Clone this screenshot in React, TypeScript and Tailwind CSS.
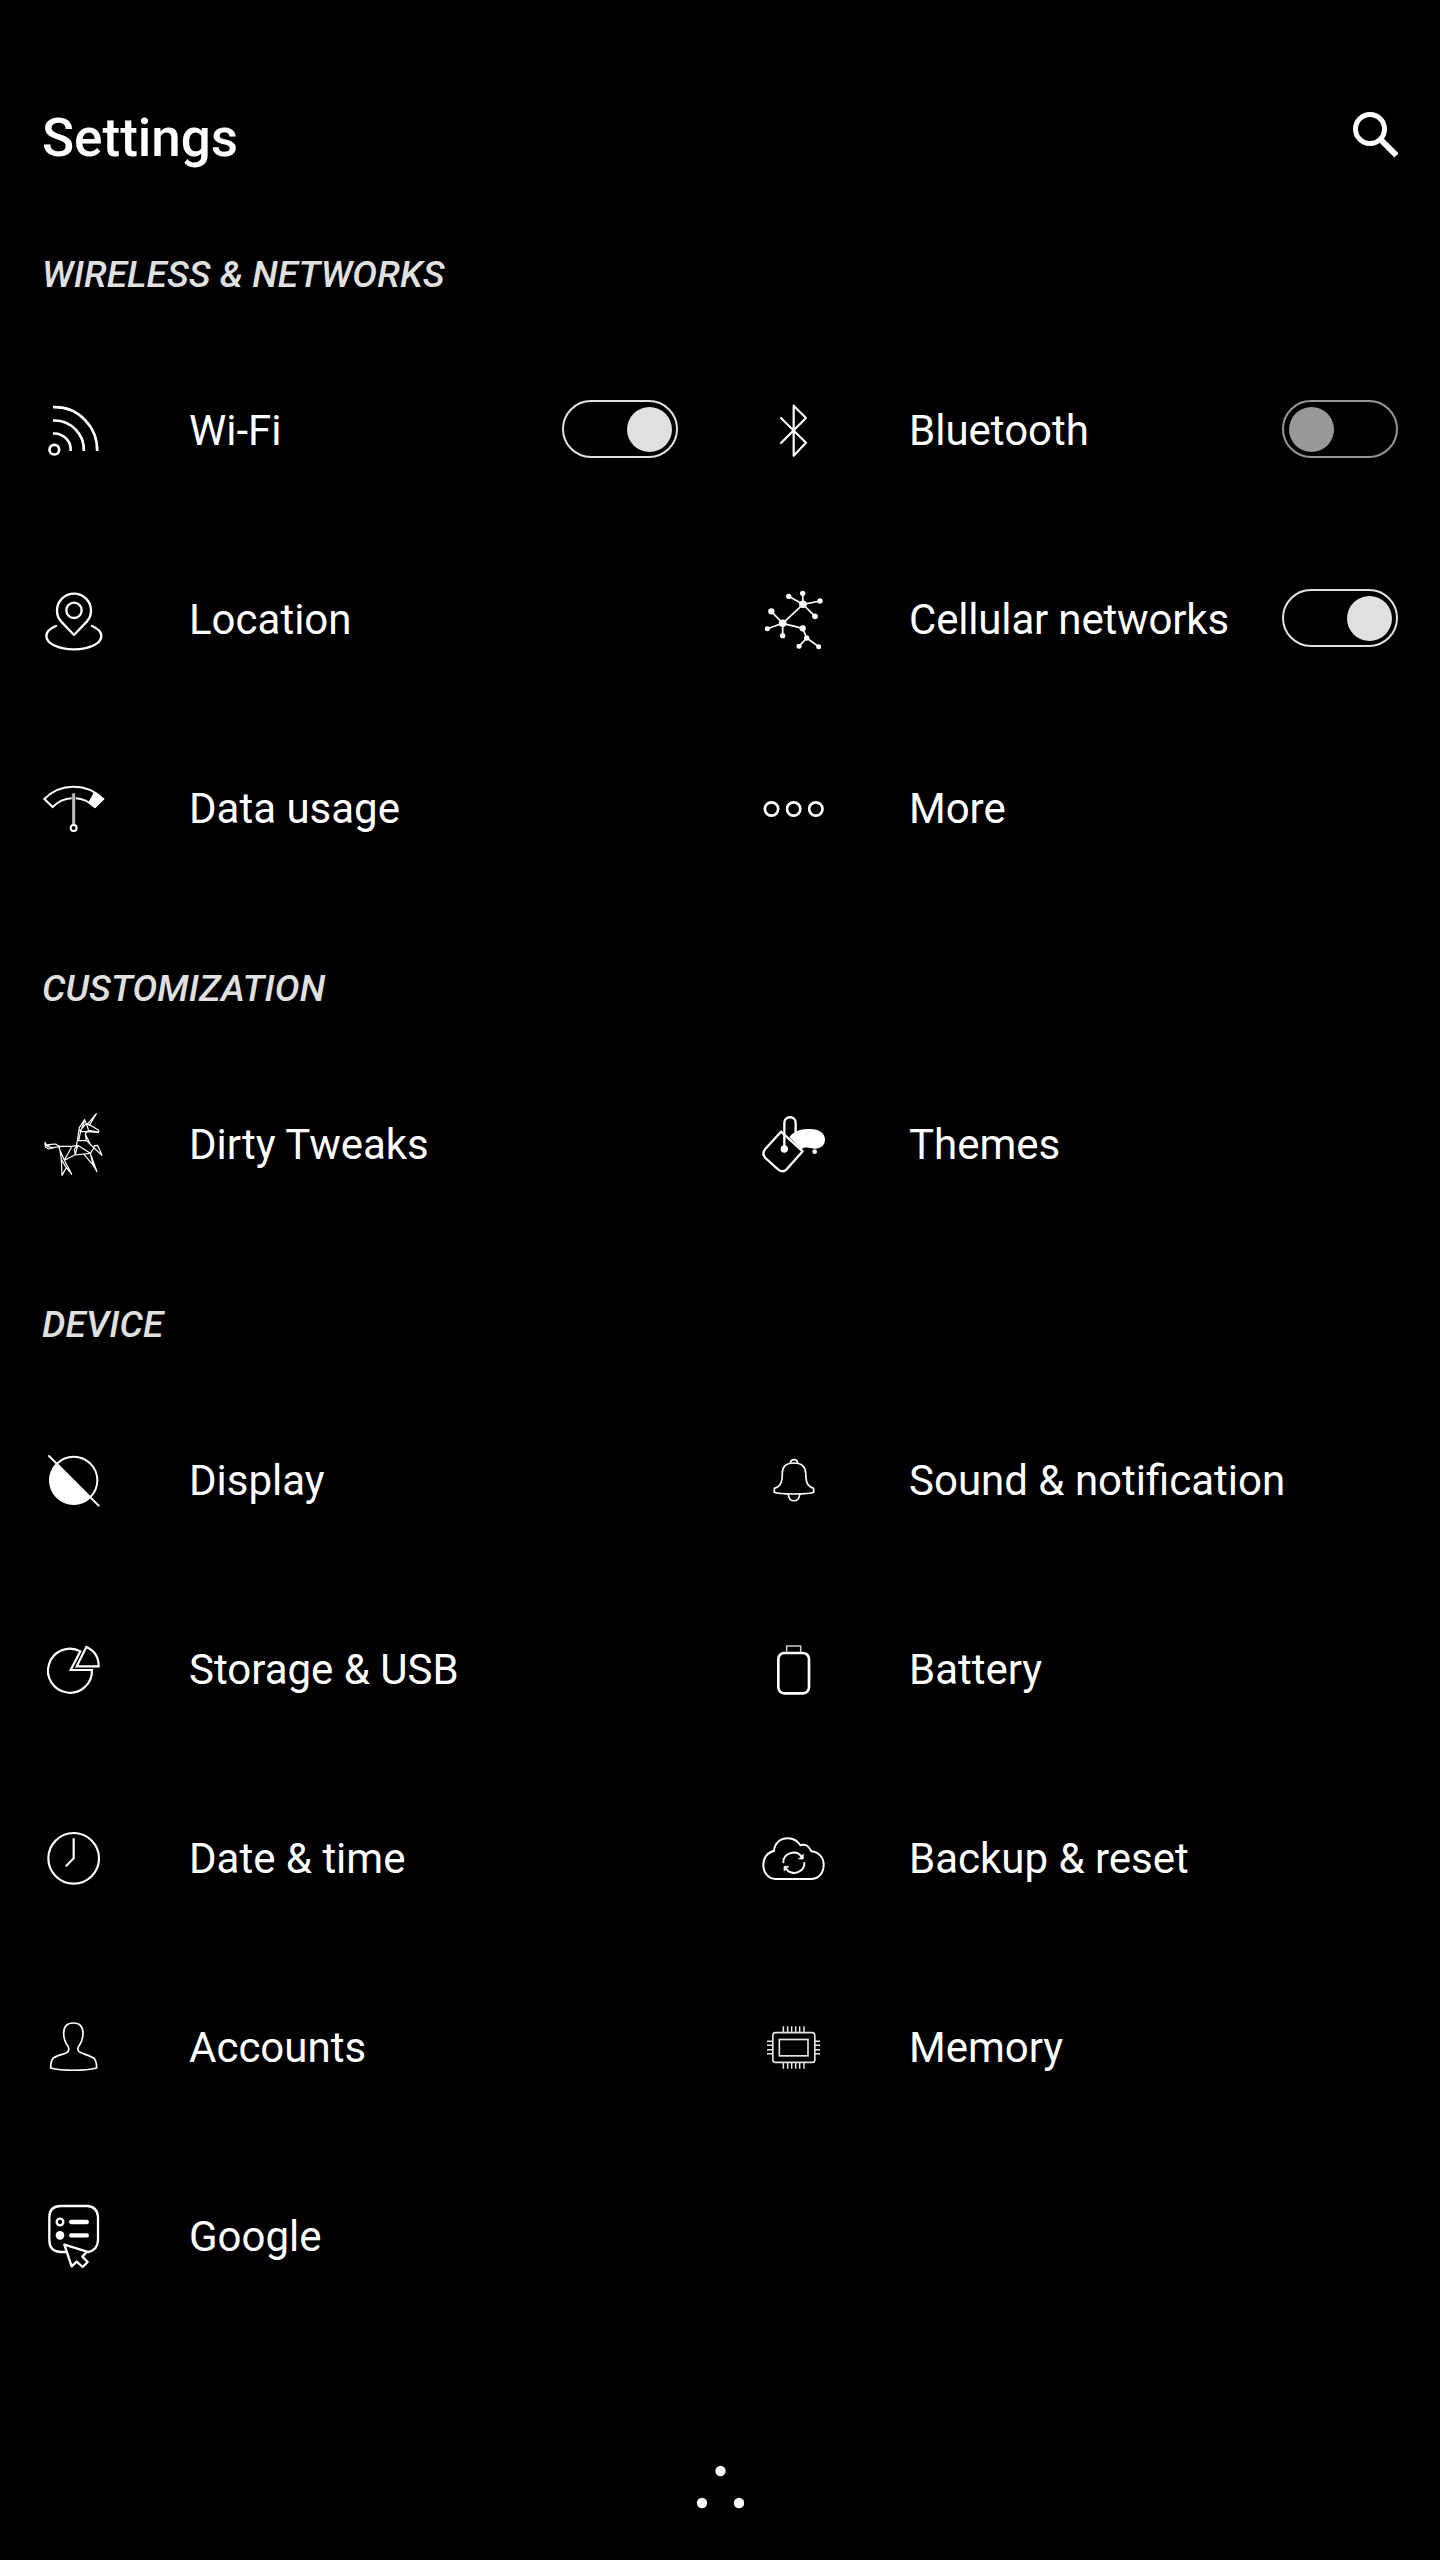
import type { ReactNode } from "react";

type IconProps = { box: string; width?: number; children: ReactNode };

function Icon({ box, width = 6, children }: IconProps) {
  return (
    <svg
      viewBox={box}
      className="mt-[63px] h-[66px] w-[66px] shrink-0 overflow-visible"
      fill="none"
      stroke="#fff"
      strokeWidth={width}
      strokeLinecap="round"
      strokeLinejoin="round"
    >
      {children}
    </svg>
  );
}

const WifiIcon = () => (
  <Icon box="33 54 198 198" width={8}>
    <circle cx="73" cy="209" r="14.500" />
    <g strokeLinecap="butt">
      <path d="M69 81.500H75A126.500 129 0 0 1 201.500 213" />
      <path d="M69 121.500H73A88.500 88 0 0 1 161.500 213" />
      <path d="M69 160.500H73A49 49 0 0 1 122 213" />
    </g>
  </Icon>
);

const BluetoothIcon = () => (
  <Icon box="63 54 198 198" width={6.5}>
    <path d="M123 114L198 188L161 227V77L198 114L123 189" />
  </Icon>
);

const LocationIcon = () => (
  <Icon box="33 621 198 198" width={7}>
    <circle cx="132" cy="691" r="23" />
    <path d="M132 765L93 724C86 716 81 704 81 692A51 51 0 0 1 183 692C183 704 178 716 171 724Z" />
    <path d="M78 738C58 746 49 756 49 768C49 791 86 808 132 808C178 808 214 791 214 768C214 756 205 746 186 738" />
  </Icon>
);

const links =
  "M189 673L146 649M189 673L188 640M189 673L240 663M189 673L225 709M189 673L128 730L94 694M128 730L82 746M128 730V767M128 730L188 745L200 774L177 799M200 774L236 800";
const nodes: [number, number, number][] = [
  [189, 673, 11.5], [128, 730, 11.5], [94, 694, 9.5], [188, 745, 9.5], [200, 774, 8],
  [146, 649, 8], [188, 640, 8], [240, 663, 8], [225, 709, 8.5], [82, 746, 7.5],
  [128, 767, 8], [177, 799, 7.5], [236, 800, 7.5],
];

const NetworkIcon = () => (
  <Icon box="63 621 198 198" width={5}>
    <path d={links} />
    {nodes.map(([x, y, r]) => (
      <circle key={`${x}-${y}`} cx={x} cy={y} r={r} fill="#fff" stroke="none" />
    ))}
  </Icon>
);

const DataIcon = () => (
  <Icon box="33 1188 198 198" width={6}>
    <g strokeLinejoin="miter" strokeLinecap="butt">
      <path d="M125 1255C103 1256 84 1265 68 1281L43 1257C67 1232 98 1220 131 1220C164 1220 195 1232 219 1257L195 1281C177 1265 158 1256 137 1255" />
      <path d="M194 1239L219 1257L195 1281L178 1268Z" fill="#fff" />
      <path d="M131 1240V1334" stroke="#bdbdbd" strokeWidth="9" />
    </g>
    <circle cx="131" cy="1344" r="9" />
  </Icon>
);

const MoreIcon = () => (
  <Icon box="63 1188 198 198" width={8}>
    <circle cx="94.500" cy="1287" r="20" />
    <circle cx="161" cy="1287" r="20" />
    <circle cx="227.500" cy="1287" r="20" />
  </Icon>
);

const UnicornIcon = () => (
  <Icon box="33 66 198 198" width={3.6}>
    <path d="M172 103L199 71L178 106M164 89L148 113L142 152L139 167M164 89L152 124L146 151M164 89L169 101L150 122M164 89L160 105M169 101L181 106L206 121V126L176 121L169 101M176 121L170 125L151 124M170 125L205 127M170 125L166 133L169 151L181 163L192 174M169 151L142 152M166 133L182 165" />
    <path d="M45 157L46 171L56 177L80 171L89 171L77 162L62 163L52 169L45 157M52 169L67 173L80 171M62 163L48 165" />
    <path d="M86 169H126L143 166L181 190L134 195L103 211L126 169M86 169L90 181L94 208L96 256L109 233L98 215L94 208M90 181L103 211M109 233L125 252L103 211M143 166L136 194L133 178L143 166" />
    <path d="M181 190L192 174L193 167L203 166L216 196L192 174M162 193L190 226L201 245L181 190M190 226L182 195" />
  </Icon>
);

const ThemesIcon = () => (
  <Icon box="63 66 198 198" width={7}>
    <path d="M123 125L188 184L140 238Q128 249 115 239L76 204Q65 192 75 178Z" />
    <path d="M133 170V99C133 76 167 76 167 99V140" />
    <circle cx="133" cy="177" r="11" fill="#fff" stroke="none" />
    <circle cx="224" cy="185" r="7" fill="#fff" stroke="none" />
    <path
      d="M148 141C164 121 184 117 211 117C238 117 255 130 255 148C255 167 242 176 225 176C213 176 205 170 190 174L185 178Z"
      fill="#fff"
      stroke="none"
    />
  </Icon>
);

const DisplayIcon = () => (
  <Icon box="33 54 198 198">
    <circle cx="131" cy="151" r="71" />
    <path d="M80 100A72 72 0 1 0 182 202Z" fill="#fff" stroke="none" />
    <path d="M57 78L206 227" />
  </Icon>
);

const StorageIcon = () => (
  <Icon box="33 621 198 198" width={6.5}>
    <path d="M151 664A66 66 0 1 0 186 720H122Z" strokeLinejoin="miter" />
    <path d="M140 709H206C206 682 192 661 169 651Z" strokeLinejoin="miter" />
  </Icon>
);

const ClockIcon = () => (
  <Icon box="33 1188 198 198" width={6.5}>
    <circle cx="131" cy="1285" r="76" />
    <path d="M131 1227V1285L109 1307" />
  </Icon>
);

const BellIcon = () => (
  <Icon box="63 54 198 198" width={5}>
    <path d="M127 129C127 109 141 99 162 99C183 99 196 109 197 129C198 154 199 168 221 175V187C215 190 205 192 162 192C120 192 109 190 103 187V175C123 170 127 154 127 129Z" />
    <path d="M151 98C154 86 170 86 173 98M145 195C147 218 177 218 179 195" />
  </Icon>
);

const BatteryIcon = () => (
  <Icon box="63 621 198 198">
    <path d="M140 664V648H182V664" stroke="#c8c8c8" strokeWidth="4.500" strokeLinejoin="miter" />
    <rect x="115" y="669" width="92" height="121" rx="18" strokeWidth="8" />
  </Icon>
);

const CloudIcon = () => (
  <Icon box="63 1188 198 198" width={6}>
    <path d="M107 1347C84 1347 70 1327 70 1304C70 1283 83 1266 102 1263C103 1240 121 1225 143 1225C161 1225 173 1233 181 1246C196 1241 208 1249 213 1263C237 1267 251 1283 251 1304C251 1328 237 1347 212 1347Z" />
    <path d="M130 1297C129 1271 166 1257 184 1279M193 1299C194 1325 159 1340 139 1318" />
    <path d="M190 1273V1287H177ZM132 1322V1309H146Z" fill="#fff" strokeWidth="2" />
  </Icon>
);

const AccountIcon = () => (
  <Icon box="33 75 198 198" width={5}>
    <path d="M130 99C111 99 101 111 101 130C101 147 107 160 115 171C118 178 116 184 110 188C95 195 78 197 69 205C63 212 62 223 62 234C96 243 164 243 200 234C200 223 198 212 193 206C182 197 164 194 150 187C144 184 142 178 145 171C153 160 159 147 159 130C159 111 149 99 130 99Z" />
  </Icon>
);

const MemoryIcon = () => (
  <Icon box="63 75 198 198" width={5}>
    <g stroke="#e4e4e4">
      <rect x="98.500" y="128" width="126" height="89" rx="8" />
      <rect x="118" y="148.500" width="86" height="49" strokeLinejoin="miter" />
      <path
        d="M130 109V127M143 109V127M155 109V127M167 109V127M179 109V127M192 109V127M130 218V236M143 218V236M155 218V236M167 218V236M179 218V236M192 218V236M81 154H98M81 166H98M81 179H98M81 191H98M225 154H240M225 166H240M225 179H240M225 191H240"
        strokeLinecap="butt"
        strokeWidth="4.500"
      />
    </g>
  </Icon>
);

const GoogleIcon = () => (
  <Icon box="33 642 198 198" width={7}>
    <path d="M108 786H91Q58 784 58 751V681Q58 650 91 648H171Q202 650 204 681V751Q203 781 174 786" />
    <circle cx="90" cy="696" r="10" />
    <circle cx="90" cy="736" r="13" fill="#fff" stroke="none" />
    <path d="M123.500 696H170.500M123.500 736H170.500" strokeWidth="13" />
    <path d="M103 764L125 829L140 815L158 831L173 816L157 800L171 785Z" />
  </Icon>
);

function Toggle({ on }: { on: boolean }) {
  return (
    <span
      role="switch"
      aria-checked={on}
      className={
        on
          ? "mt-[65px] flex h-[58px] w-[116px] shrink-0 items-center justify-end rounded-full border-2 border-[#e0e0e0] px-[4.5px]"
          : "mt-[65px] flex h-[58px] w-[116px] shrink-0 items-center justify-start rounded-full border-2 border-[#969696] px-[4.5px]"
      }
    >
      <span className={on ? "size-[45px] rounded-full bg-[#e0e0e0]" : "size-[45px] rounded-full bg-[#999999]"} />
    </span>
  );
}

type Item = { label: string; icon: ReactNode; toggle?: boolean; tight?: boolean };

const sections: { title: string; items: Item[] }[] = [
  {
    title: "WIRELESS & NETWORKS",
    items: [
      { label: "Wi-Fi", icon: <WifiIcon />, toggle: true },
      { label: "Bluetooth", icon: <BluetoothIcon />, toggle: false },
      { label: "Location", icon: <LocationIcon /> },
      { label: "Cellular networks", icon: <NetworkIcon />, toggle: true, tight: true },
      { label: "Data usage", icon: <DataIcon /> },
      { label: "More", icon: <MoreIcon /> },
    ],
  },
  {
    title: "CUSTOMIZATION",
    items: [
      { label: "Dirty Tweaks", icon: <UnicornIcon /> },
      { label: "Themes", icon: <ThemesIcon /> },
    ],
  },
  {
    title: "DEVICE",
    items: [
      { label: "Display", icon: <DisplayIcon /> },
      { label: "Sound & notification", icon: <BellIcon /> },
      { label: "Storage & USB", icon: <StorageIcon /> },
      { label: "Battery", icon: <BatteryIcon /> },
      { label: "Date & time", icon: <ClockIcon /> },
      { label: "Backup & reset", icon: <CloudIcon /> },
      { label: "Accounts", icon: <AccountIcon /> },
      { label: "Memory", icon: <MemoryIcon /> },
      { label: "Google", icon: <GoogleIcon /> },
    ],
  },
];

export default function App() {
  return (
    <div className="flex h-[2560px] w-[1440px] flex-col overflow-hidden bg-black font-['Roboto',sans-serif] text-white">
      <header className="flex h-[188px] items-start justify-between px-[42px]">
        <h1 className="mt-[106px] text-[53px] leading-[64px] font-medium">Settings</h1>
        <svg viewBox="0 0 45 46" className="mt-[112px] h-[46px] w-[45px]" fill="none" stroke="#fff">
          <circle cx="17" cy="17" r="14.500" strokeWidth="5" />
          <path d="M28.500 28.500L43.500 43.500" strokeWidth="6" />
        </svg>
      </header>
      <main className="grow">
        {sections.map((section) => (
          <section key={section.title}>
            <h2 className="h-[147px] pt-[63px] pl-[42px] text-[37px] leading-[48px] font-medium tracking-[0.1px] text-[#e0e0e0] italic">
              {section.title}
            </h2>
            <div className="grid grid-cols-2">
              {section.items.map((item) => (
                <div key={item.label} className="flex h-[189px] items-start pr-[42px] pl-[41px]">
                  {item.icon}
                  <span
                    className={
                      item.tight
                        ? "mt-[72px] ml-[82px] grow text-[42px] leading-[48px] tracking-[-0.17px] whitespace-nowrap"
                        : "mt-[72px] ml-[82px] grow text-[42px] leading-[48px] whitespace-nowrap"
                    }
                  >
                    {item.label}
                  </span>
                  {item.toggle !== undefined && <Toggle on={item.toggle} />}
                </div>
              ))}
            </div>
          </section>
        ))}
      </main>
      <nav className="flex h-[99px] justify-center">
        <svg viewBox="0 0 48 44" className="mt-[4px] h-[44px] w-[48px]" fill="#fff">
          <circle cx="24.500" cy="6" r="5.200" />
          <circle cx="6" cy="38" r="5.200" />
          <circle cx="43" cy="38" r="5.200" />
        </svg>
      </nav>
    </div>
  );
}
